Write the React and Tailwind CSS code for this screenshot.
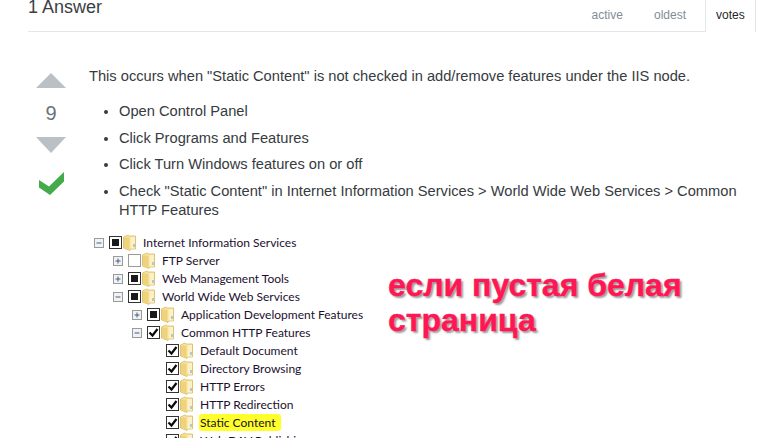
const Folder = () => (
  <svg width="13" height="17" viewBox="0 0 13 17" className="shrink-0">
    <path d="M0.5 3 L5 1 L6.5 2 L12.5 2 L12.5 15 L7 15 L7 16.5 L0.5 14 Z" fill="#f6e4a4" stroke="#d9b95c" strokeWidth="0.8" />
    <path d="M7.5 3 L12 3 L12 14.5 L7.5 14.5 Z" fill="#fbf0c6" />
    <path d="M1 3.5 L6.5 3.5 L6.5 15.5 L1 13.5 Z" fill="#efd27a" />
    <path d="M10.5 10 L11.5 10 L11.5 13 L10.5 13 Z" fill="#6f9fc8" />
  </svg>
);

const Expander = ({ kind }) => (
  <svg width="10" height="10" viewBox="0 0 10 10" className="shrink-0">
    <rect x="0.5" y="0.5" width="9" height="9" fill="#f2f2f2" stroke="#9a9a9a" />
    <path d={kind === "plus" ? "M2.5 5H7.5M5 2.5V7.5" : "M2.5 5H7.5"} stroke="#3f5f8f" strokeWidth="1" fill="none" />
  </svg>
);

const Check = ({ state }) => (
  <div className={`w-[13px] h-[13px] shrink-0 border flex items-center justify-center bg-white ${state === "empty" ? "border-[#9a9a9a]" : "border-[#333333]"}`}>
    {state === "box" && <div className="w-[7px] h-[7px] bg-[#1a1a1a]" />}
    {state === "check" && (
      <svg width="11" height="11" viewBox="0 0 11 11">
        <path d="M1.5 5.5 L4.5 8.5 L9.5 2" fill="none" stroke="#0a0a0a" strokeWidth="2.2" />
      </svg>
    )}
  </div>
);

const rows = [
  { d: 0, e: "minus", c: "box", t: "Internet Information Services" },
  { d: 1, e: "plus", c: "empty", t: "FTP Server" },
  { d: 1, e: "plus", c: "box", t: "Web Management Tools" },
  { d: 1, e: "minus", c: "box", t: "World Wide Web Services" },
  { d: 2, e: "plus", c: "box", t: "Application Development Features" },
  { d: 2, e: "minus", c: "check", t: "Common HTTP Features" },
  { d: 3, c: "check", t: "Default Document" },
  { d: 3, c: "check", t: "Directory Browsing" },
  { d: 3, c: "check", t: "HTTP Errors" },
  { d: 3, c: "check", t: "HTTP Redirection" },
  { d: 3, c: "check", t: "Static Content", hl: true },
  { d: 3, c: "check", t: "Web DAV Publishing" },
];

const pad = ["pl-0", "pl-[19px]", "pl-[38px]", "pl-[57px]"];

const Row = ({ r }) => (
  <div className={`h-[18px] flex items-center ${pad[r.d]}`}>
    <div className="w-[15px] shrink-0 flex items-center">{r.e && <Expander kind={r.e} />}</div>
    <Check state={r.c} />
    <div className="ml-px"><Folder /></div>
    {r.hl ? (
      <span className="ml-[6px] pl-px pr-[6px] text-[12px] leading-[17px] whitespace-nowrap text-[#1c1030] font-['Lato',sans-serif] bg-[#ffff2a] rounded-[3px]">{r.t}</span>
    ) : (
      <span className="ml-[7px] text-[12px] whitespace-nowrap text-[#1c1030] font-['Lato',sans-serif]">{r.t}</span>
    )}
  </div>
);

export default function App() {
  return (
    <div className="w-[761px] h-[443px] overflow-hidden bg-white relative font-['Liberation_Sans',sans-serif] text-[#363b40]">
      <div className="ml-[28px] mr-[5px] h-[32px] border-b border-[#e4e6e8] flex justify-between">
        <div className="text-[18px] leading-[15px] text-[#3b4045]">1 Answer</div>
        <div className="flex text-[12px] h-[32px]">
          <div className="mt-[8px] leading-[14px] mr-[31px] -ml-px text-[#848d95]">active</div>
          <div className="mt-[8px] leading-[14px] mr-[19px] text-[#848d95]">oldest</div>
          <div className="w-[51px] h-[32px] border-x border-[#e4e6e8] bg-white pt-[8px] leading-[14px] pl-[10px] text-[#242729]">votes</div>
        </div>
      </div>

      <div className="flex mt-[35px] ml-[36px]">
        <div className="w-[53px] shrink-0 flex flex-col">
          <svg width="30" height="16" viewBox="0 0 30 16" className="mt-[6px]"><path d="M15 0 L30 15 L0 15 Z" fill="#bbc0c4" /></svg>
          <div className="w-[30px] text-center text-[20px] leading-[24px] mt-[12px] text-[#6a737c]">9</div>
          <svg width="30" height="16" viewBox="0 0 30 16" className="mt-[12px]"><path d="M0 0 L30 0 L15 16 Z" fill="#bbc0c4" /></svg>
          <svg width="26" height="24" viewBox="0 0 26 24" className="mt-[19px] ml-[3px]"><path d="M0 8 L10 14.5 L25 0 L25 9.5 L11 23 L0 15.5 Z" fill="#43ab49" /></svg>
        </div>
        <div className="text-[14.67px] leading-[19px] flex-1 min-w-0">
          <p className="whitespace-nowrap">This occurs when "Static Content" is not checked in add/remove features under the IIS node.</p>
          <ul className="list-disc pl-[30px] mt-[16px] flex flex-col gap-[7.5px]">
            <li>Open Control Panel</li>
            <li>Click Programs and Features</li>
            <li>Click Turn Windows features on or off</li>
            <li>Check "Static Content" in Internet Information Services &gt; World Wide Web Services &gt; Common HTTP Features</li>
          </ul>
          <div className="mt-[14px] ml-[5px] h-[204px] overflow-hidden">
            {rows.map((r) => <Row key={r.t} r={r} />)}
          </div>
        </div>
      </div>

      <div className="absolute left-[388px] top-[268px] text-[32px] leading-[35px] font-bold text-[#ff1654] [-webkit-text-stroke:0.4px_#ff1654] [text-shadow:2px_2px_2px_#999,-1px_-1px_1px_#fff]">
        если пустая белая<br />страница
      </div>
    </div>
  );
}
